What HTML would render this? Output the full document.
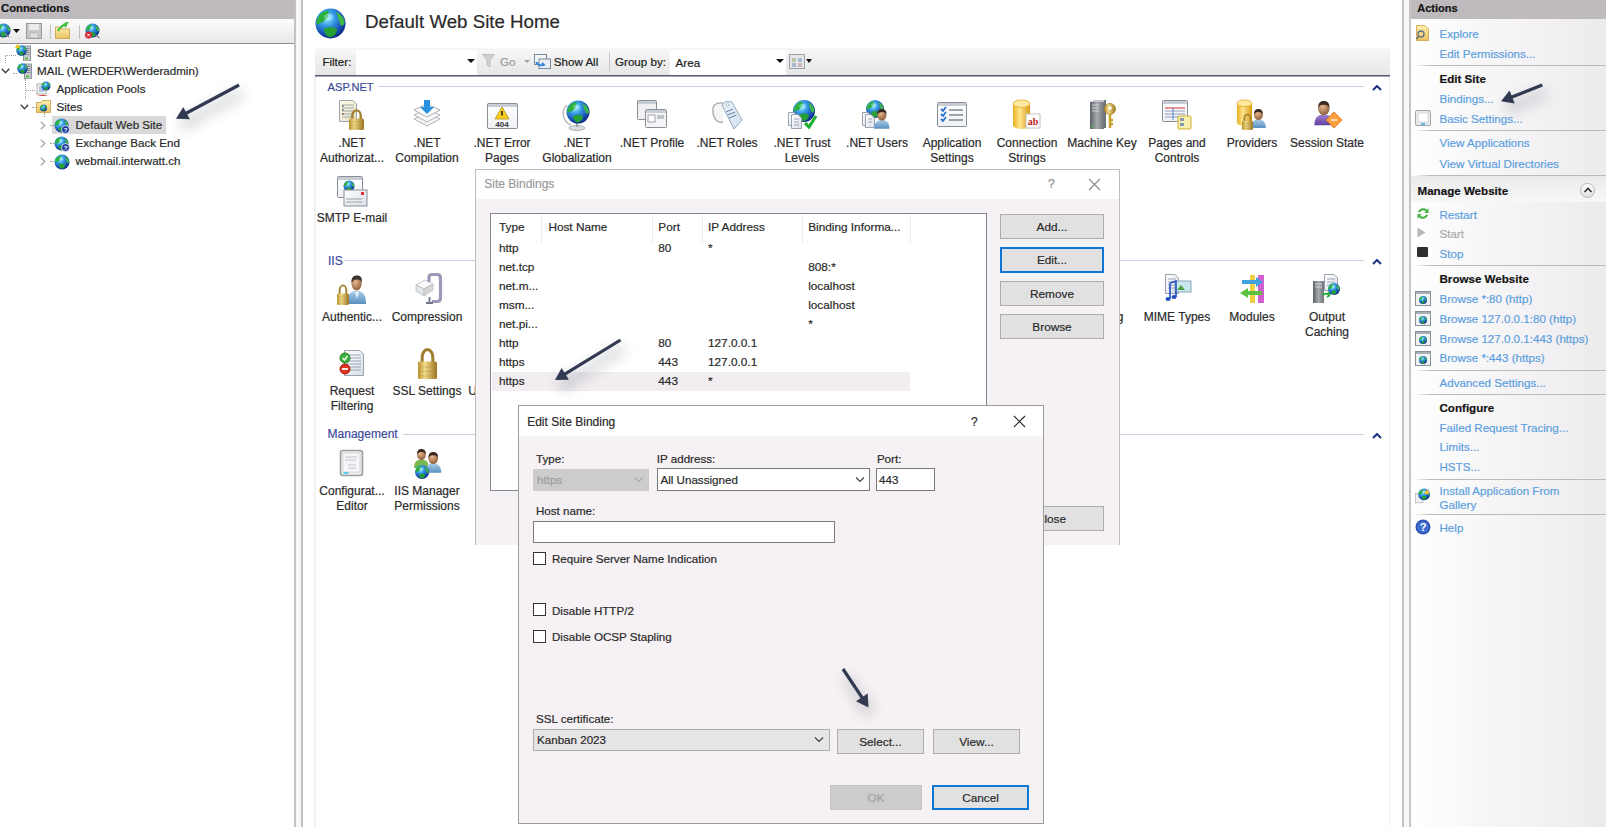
<!DOCTYPE html><html><head><meta charset="utf-8"><style>
html,body{margin:0;padding:0;}
body{width:1606px;height:827px;position:relative;overflow:hidden;background:#fff;font-family:"Liberation Sans", sans-serif;}
.t{position:absolute;white-space:nowrap;line-height:1;-webkit-text-stroke:0.2px currentColor;}
.r{position:absolute;box-sizing:border-box;}

</style></head><body><div id="wrap" style="position:absolute;left:0;top:0;width:1606px;height:827px;overflow:hidden;">
<div class="r" style="left:0px;top:0px;width:295px;height:19px;background:#bebabd;"></div>
<div class="t" style="left:1.0px;top:2.6px;font-size:11.3px;color:#141414;font-weight:bold;">Connections</div>
<div class="r" style="left:0px;top:19px;width:295px;height:25px;background:linear-gradient(#fcfcfc,#e9e7e8);border-bottom:1px solid #8e8e9c;"></div>
<div class="r" style="left:0px;top:44px;width:295px;height:783px;background:#fff;"></div>
<div class="r" style="left:294px;top:0px;width:2px;height:827px;background:#c2c2c2;"></div>
<div class="r" style="left:296px;top:0px;width:5px;height:827px;background:#f7f7f7;"></div>
<div class="r" style="left:301px;top:0px;width:2px;height:827px;background:#c2c2c2;"></div>
<div class="r" style="left:314px;top:77px;width:2px;height:750px;background:#f1f1f1;"></div>
<div class="r" style="left:1389px;top:77px;width:1px;height:750px;background:#f1f1f1;"></div>
<div class="r" style="left:1402px;top:0px;width:2px;height:827px;background:#c2c2c2;"></div>
<div class="r" style="left:1404px;top:0px;width:5px;height:827px;background:#f7f7f7;"></div>
<div class="r" style="left:1409px;top:0px;width:2px;height:827px;background:#c6c6c6;"></div>
<div class="r" style="left:52px;top:116px;width:114px;height:18px;background:#d9d9d9;"></div>
<div class="t" style="left:37.0px;top:46.7px;font-size:11.6px;color:#2a2a2a;font-weight:normal;">Start Page</div>
<div class="t" style="left:37.0px;top:65.1px;font-size:11.6px;color:#2a2a2a;font-weight:normal;">MAIL (WERDER\Werderadmin)</div>
<div class="t" style="left:56.5px;top:83.0px;font-size:11.6px;color:#2a2a2a;font-weight:normal;">Application Pools</div>
<div class="t" style="left:56.5px;top:101.0px;font-size:11.6px;color:#2a2a2a;font-weight:normal;">Sites</div>
<div class="t" style="left:75.5px;top:119.0px;font-size:11.6px;color:#2a2a2a;font-weight:normal;">Default Web Site</div>
<div class="t" style="left:75.5px;top:137.1px;font-size:11.6px;color:#2a2a2a;font-weight:normal;">Exchange Back End</div>
<div class="t" style="left:75.5px;top:155.2px;font-size:11.6px;color:#2a2a2a;font-weight:normal;">webmail.interwatt.ch</div>
<div class="t" style="left:365.0px;top:12.5px;font-size:18.7px;color:#2a2a2a;font-weight:normal;">Default Web Site Home</div>
<div class="r" style="left:315px;top:48px;width:1075px;height:29px;background:linear-gradient(#f7f7f7,#e6e6e6);border-bottom:1px solid #a8a6b8;"></div>
<div class="r" style="left:315px;top:75px;width:1075px;height:1px;background:#5e5a72;"></div>
<div class="r" style="left:356px;top:50px;width:121px;height:25px;background:#fff;"></div>
<div class="r" style="left:670px;top:50px;width:116px;height:25px;background:#fff;"></div>
<div class="t" style="left:322.4px;top:56.2px;font-size:11.6px;color:#202020;font-weight:normal;">Filter:</div>
<div class="t" style="left:500.0px;top:56.2px;font-size:11.6px;color:#9a9a9a;font-weight:normal;">Go</div>
<div class="t" style="left:553.8px;top:56.2px;font-size:11.6px;color:#202020;font-weight:normal;">Show All</div>
<div class="r" style="left:609px;top:52px;width:1px;height:20px;background:#c8c8c8;"></div>
<div class="t" style="left:615.0px;top:56.2px;font-size:11.6px;color:#202020;font-weight:normal;">Group by:</div>
<div class="t" style="left:675.6px;top:56.7px;font-size:11.6px;color:#202020;font-weight:normal;">Area</div>
<div class="t" style="left:327.6px;top:81.6px;font-size:11.1px;color:#3d4d9c;font-weight:normal;">ASP.NET</div>
<div class="r" style="left:378px;top:86px;width:986px;height:1px;background:#c9d0e6;"></div>
<div class="t" style="left:328.0px;top:254.5px;font-size:12px;color:#3d4d9c;font-weight:normal;">IIS</div>
<div class="r" style="left:344px;top:260px;width:1020px;height:1px;background:#c9d0e6;"></div>
<div class="t" style="left:327.6px;top:428.3px;font-size:12px;color:#3d4d9c;font-weight:normal;">Management</div>
<div class="r" style="left:403px;top:434px;width:961px;height:1px;background:#c9d0e6;"></div>
<div class="t" style="left:152.0px;width:400px;text-align:center;top:136.8px;font-size:12px;color:#2a2a2a;font-weight:normal;">.NET</div>
<div class="t" style="left:152.0px;width:400px;text-align:center;top:151.8px;font-size:12px;color:#2a2a2a;font-weight:normal;">Authorizat...</div>
<div class="t" style="left:227.0px;width:400px;text-align:center;top:136.8px;font-size:12px;color:#2a2a2a;font-weight:normal;">.NET</div>
<div class="t" style="left:227.0px;width:400px;text-align:center;top:151.8px;font-size:12px;color:#2a2a2a;font-weight:normal;">Compilation</div>
<div class="t" style="left:302.0px;width:400px;text-align:center;top:136.8px;font-size:12px;color:#2a2a2a;font-weight:normal;">.NET Error</div>
<div class="t" style="left:302.0px;width:400px;text-align:center;top:151.8px;font-size:12px;color:#2a2a2a;font-weight:normal;">Pages</div>
<div class="t" style="left:377.0px;width:400px;text-align:center;top:136.8px;font-size:12px;color:#2a2a2a;font-weight:normal;">.NET</div>
<div class="t" style="left:377.0px;width:400px;text-align:center;top:151.8px;font-size:12px;color:#2a2a2a;font-weight:normal;">Globalization</div>
<div class="t" style="left:452.0px;width:400px;text-align:center;top:136.8px;font-size:12px;color:#2a2a2a;font-weight:normal;">.NET Profile</div>
<div class="t" style="left:527.0px;width:400px;text-align:center;top:136.8px;font-size:12px;color:#2a2a2a;font-weight:normal;">.NET Roles</div>
<div class="t" style="left:602.0px;width:400px;text-align:center;top:136.8px;font-size:12px;color:#2a2a2a;font-weight:normal;">.NET Trust</div>
<div class="t" style="left:602.0px;width:400px;text-align:center;top:151.8px;font-size:12px;color:#2a2a2a;font-weight:normal;">Levels</div>
<div class="t" style="left:677.0px;width:400px;text-align:center;top:136.8px;font-size:12px;color:#2a2a2a;font-weight:normal;">.NET Users</div>
<div class="t" style="left:752.0px;width:400px;text-align:center;top:136.8px;font-size:12px;color:#2a2a2a;font-weight:normal;">Application</div>
<div class="t" style="left:752.0px;width:400px;text-align:center;top:151.8px;font-size:12px;color:#2a2a2a;font-weight:normal;">Settings</div>
<div class="t" style="left:827.0px;width:400px;text-align:center;top:136.8px;font-size:12px;color:#2a2a2a;font-weight:normal;">Connection</div>
<div class="t" style="left:827.0px;width:400px;text-align:center;top:151.8px;font-size:12px;color:#2a2a2a;font-weight:normal;">Strings</div>
<div class="t" style="left:902.0px;width:400px;text-align:center;top:136.8px;font-size:12px;color:#2a2a2a;font-weight:normal;">Machine Key</div>
<div class="t" style="left:977.0px;width:400px;text-align:center;top:136.8px;font-size:12px;color:#2a2a2a;font-weight:normal;">Pages and</div>
<div class="t" style="left:977.0px;width:400px;text-align:center;top:151.8px;font-size:12px;color:#2a2a2a;font-weight:normal;">Controls</div>
<div class="t" style="left:1052.0px;width:400px;text-align:center;top:136.8px;font-size:12px;color:#2a2a2a;font-weight:normal;">Providers</div>
<div class="t" style="left:1127.0px;width:400px;text-align:center;top:136.8px;font-size:12px;color:#2a2a2a;font-weight:normal;">Session State</div>
<div class="t" style="left:152.0px;width:400px;text-align:center;top:211.8px;font-size:12px;color:#2a2a2a;font-weight:normal;">SMTP E-mail</div>
<div class="t" style="left:152.0px;width:400px;text-align:center;top:310.8px;font-size:12px;color:#2a2a2a;font-weight:normal;">Authentic...</div>
<div class="t" style="left:227.0px;width:400px;text-align:center;top:310.8px;font-size:12px;color:#2a2a2a;font-weight:normal;">Compression</div>
<div class="t" style="left:902.0px;width:400px;text-align:center;top:310.8px;font-size:12px;color:#2a2a2a;font-weight:normal;">Logging</div>
<div class="t" style="left:977.0px;width:400px;text-align:center;top:310.8px;font-size:12px;color:#2a2a2a;font-weight:normal;">MIME Types</div>
<div class="t" style="left:1052.0px;width:400px;text-align:center;top:310.8px;font-size:12px;color:#2a2a2a;font-weight:normal;">Modules</div>
<div class="t" style="left:1127.0px;width:400px;text-align:center;top:310.8px;font-size:12px;color:#2a2a2a;font-weight:normal;">Output</div>
<div class="t" style="left:1127.0px;width:400px;text-align:center;top:325.8px;font-size:12px;color:#2a2a2a;font-weight:normal;">Caching</div>
<div class="t" style="left:152.0px;width:400px;text-align:center;top:385.3px;font-size:12px;color:#2a2a2a;font-weight:normal;">Request</div>
<div class="t" style="left:152.0px;width:400px;text-align:center;top:400.3px;font-size:12px;color:#2a2a2a;font-weight:normal;">Filtering</div>
<div class="t" style="left:227.0px;width:400px;text-align:center;top:385.3px;font-size:12px;color:#2a2a2a;font-weight:normal;">SSL Settings</div>
<div class="t" style="left:302.0px;width:400px;text-align:center;top:385.3px;font-size:12px;color:#2a2a2a;font-weight:normal;">URL Rewrite</div>
<div class="t" style="left:152.0px;width:400px;text-align:center;top:484.8px;font-size:12px;color:#2a2a2a;font-weight:normal;">Configurat...</div>
<div class="t" style="left:152.0px;width:400px;text-align:center;top:499.8px;font-size:12px;color:#2a2a2a;font-weight:normal;">Editor</div>
<div class="t" style="left:227.0px;width:400px;text-align:center;top:484.8px;font-size:12px;color:#2a2a2a;font-weight:normal;">IIS Manager</div>
<div class="t" style="left:227.0px;width:400px;text-align:center;top:499.8px;font-size:12px;color:#2a2a2a;font-weight:normal;">Permissions</div>
<div class="r" style="left:1411px;top:0px;width:195px;height:19px;background:#bebabd;"></div>
<div class="t" style="left:1417.3px;top:2.9px;font-size:11px;color:#141414;font-weight:bold;">Actions</div>
<div class="r" style="left:1411px;top:19px;width:195px;height:808px;background:linear-gradient(90deg,#ffffff 0%,#f7f7f7 35%,#f3f0f3 70%,#ebebeb 100%);"></div>
<div class="t" style="left:1439.5px;top:28.0px;font-size:11.6px;color:#5b9fe0;font-weight:normal;">Explore</div>
<div class="t" style="left:1439.5px;top:47.9px;font-size:11.6px;color:#5b9fe0;font-weight:normal;">Edit Permissions...</div>
<div class="t" style="left:1439.5px;top:73.1px;font-size:11.6px;color:#141414;font-weight:bold;">Edit Site</div>
<div class="t" style="left:1439.5px;top:93.2px;font-size:11.6px;color:#5b9fe0;font-weight:normal;">Bindings...</div>
<div class="t" style="left:1439.5px;top:112.9px;font-size:11.6px;color:#5b9fe0;font-weight:normal;">Basic Settings...</div>
<div class="t" style="left:1439.5px;top:137.4px;font-size:11.6px;color:#5b9fe0;font-weight:normal;">View Applications</div>
<div class="t" style="left:1439.5px;top:157.7px;font-size:11.6px;color:#5b9fe0;font-weight:normal;">View Virtual Directories</div>
<div class="r" style="left:1414px;top:65px;width:192px;height:2px;background:linear-gradient(90deg,rgba(170,170,170,0),#bababa 17px);height:1px;"></div>
<div class="r" style="left:1414px;top:130px;width:192px;height:2px;background:linear-gradient(90deg,rgba(170,170,170,0),#bababa 17px);height:1px;"></div>
<div class="r" style="left:1414px;top:175px;width:192px;height:2px;background:linear-gradient(90deg,rgba(170,170,170,0),#bababa 17px);height:1px;"></div>
<svg width="0" height="0" style="position:absolute"><defs>
<radialGradient id="gGlobe" cx="0.38" cy="0.32" r="0.7"><stop offset="0" stop-color="#a8f0ff"/><stop offset="0.35" stop-color="#3aa0e8"/><stop offset="0.8" stop-color="#1448b0"/><stop offset="1" stop-color="#0c2c80"/></radialGradient>
<linearGradient id="gGold" x1="0" y1="0" x2="1" y2="0"><stop offset="0" stop-color="#b8902a"/><stop offset="0.35" stop-color="#f2dc8a"/><stop offset="1" stop-color="#9c7420"/></linearGradient>
<linearGradient id="gGoldV" x1="0" y1="0" x2="0" y2="1"><stop offset="0" stop-color="#f8e8a0"/><stop offset="1" stop-color="#b08828"/></linearGradient>
<linearGradient id="gCyl" x1="0" y1="0" x2="1" y2="0"><stop offset="0" stop-color="#e8b020"/><stop offset="0.4" stop-color="#ffe690"/><stop offset="1" stop-color="#d89a10"/></linearGradient>
<linearGradient id="gPaper" x1="0" y1="0" x2="1" y2="1"><stop offset="0" stop-color="#ffffff"/><stop offset="1" stop-color="#d8dee8"/></linearGradient>
<linearGradient id="gCream" x1="0" y1="0" x2="1" y2="1"><stop offset="0" stop-color="#fffbea"/><stop offset="1" stop-color="#e8e0c0"/></linearGradient>
<linearGradient id="gGray" x1="0" y1="0" x2="1" y2="0"><stop offset="0" stop-color="#5a6068"/><stop offset="0.5" stop-color="#a8acb0"/><stop offset="1" stop-color="#70747a"/></linearGradient>
<linearGradient id="gFolder" x1="0" y1="0" x2="0" y2="1"><stop offset="0" stop-color="#fff0b0"/><stop offset="1" stop-color="#e8c060"/></linearGradient>
<radialGradient id="gFace" cx="0.4" cy="0.35" r="0.7"><stop offset="0" stop-color="#e8b890"/><stop offset="1" stop-color="#8a5a38"/></radialGradient>
<linearGradient id="gShirt" x1="0" y1="0" x2="0" y2="1"><stop offset="0" stop-color="#a8cce8"/><stop offset="1" stop-color="#5a90c0"/></linearGradient>
<linearGradient id="gPurple" x1="0" y1="0" x2="0" y2="1"><stop offset="0" stop-color="#a080d0"/><stop offset="1" stop-color="#6040a0"/></linearGradient>
<linearGradient id="gWin" x1="0" y1="0" x2="0" y2="1"><stop offset="0" stop-color="#ffffff"/><stop offset="1" stop-color="#eef0f4"/></linearGradient>
<filter id="soft"><feGaussianBlur stdDeviation="0.35"/></filter>
</defs></svg>
<svg class="r" style="left:336px;top:99px" width="32" height="32" viewBox="0 0 32 32"><g transform="translate(3,1)"><path d="M0.5 0.5 H14 L17.5 4 V21.5 H0.5 Z" fill="url(#gCream)" stroke="#9aa2ae" stroke-width="1"/><path d="M3 5 H15" stroke="#7a8aa0" stroke-width="1" opacity="0.7"/><path d="M3 8 H15" stroke="#7a8aa0" stroke-width="1" opacity="0.7"/><path d="M3 11 H15" stroke="#7a8aa0" stroke-width="1" opacity="0.7"/><path d="M3 14 H15" stroke="#7a8aa0" stroke-width="1" opacity="0.7"/><path d="M3 17 H15" stroke="#7a8aa0" stroke-width="1" opacity="0.7"/></g><path d="M6 7h1.5M6 11h1.5M6 15h1.5" stroke="#555" stroke-width="1.5"/><g transform="translate(13,11)"><path d="M3.3 9.0 V5.6000000000000005 A4.2 5.2 0 0 1 11.700000000000001 5.6000000000000005 V9.0" stroke="#a08030" stroke-width="2.4" fill="none"/><rect x="0" y="8.4" width="15" height="11.6" rx="1.5" fill="url(#gGold)"/><path d="M1 12.0 H14 M1 15.0 H14 M1 18.0 H14" stroke="#a88a38" stroke-width="0.6" opacity="0.6"/></g></svg>
<svg class="r" style="left:411px;top:99px" width="32" height="32" viewBox="0 0 32 32"><path d="M16 14 L29 20 L16 27 L3 20 Z" fill="#f4f4f4" stroke="#b0b4ba"/><path d="M16 10 L29 16 L16 23 L3 16 Z" fill="#f8f8f8" stroke="#b0b4ba"/><path d="M16 5 L29 11 L16 18 L3 11 Z" fill="#fff" stroke="#a8acb2"/><path d="M13 1 H19 V8 H23 L16 15 L9 8 H13 Z" fill="#2a90e0"/></svg>
<svg class="r" style="left:486px;top:99px" width="32" height="32" viewBox="0 0 32 32"><g transform="translate(1,4)"><rect x="0.5" y="0.5" width="30" height="25" rx="1" fill="url(#gWin)" stroke="#8a8e96" stroke-width="1"/><rect x="1" y="1" width="29" height="3" fill="#c8ccd4"/></g><path d="M16 8 L23 20 H9 Z" fill="#f8d020" stroke="#b89010" stroke-width="0.8"/><path d="M16 12 V16.5" stroke="#222" stroke-width="1.6"/><text x="16" y="28" font-size="8" font-family="Liberation Sans" font-weight="bold" text-anchor="middle" fill="#333">404</text></svg>
<svg class="r" style="left:561px;top:99px" width="32" height="32" viewBox="0 0 32 32"><ellipse cx="16" cy="29" rx="8" ry="2.5" fill="#d8dce0" stroke="#b0b4b8"/><path d="M16 24 V28" stroke="#a0a4a8" stroke-width="2"/><path d="M6 6 A12 12 0 0 0 10 26" stroke="#b8bcc0" stroke-width="1.5" fill="none"/><g transform="translate(5.5,1.5) scale(0.71875)"><circle cx="16" cy="16" r="16" fill="url(#gGlobe)"/><path d="M2.5 10 C5 5 9 2.5 14 2.5 C15 5 12 8 13 10 C10 12 9 15 6 15 C4 16 2.5 17 1 17 C1 14 1.5 12 2.5 10 Z" fill="#2cb03c"/><path d="M9 22 C13 19 19 19 23 22 C23 27 19 30.5 14 30.5 C11 28 9 25 9 22 Z" fill="#24a034"/><path d="M22 4 C26 5 30 9 31 14 C31 18 29 19 27 18 C26 14 24 12 24 9 Z" fill="#3cb848"/><ellipse cx="14" cy="9" rx="5" ry="3.5" fill="#c8ffff" opacity="0.35"/></g></svg>
<svg class="r" style="left:636px;top:99px" width="32" height="32" viewBox="0 0 32 32"><g transform="translate(1,1)"><rect x="0.5" y="0.5" width="19" height="19" rx="1" fill="#f0f0f2" stroke="#8a8e96" stroke-width="1"/><rect x="1" y="1" width="18" height="3" fill="#c8ccd4"/></g><g transform="translate(9,10)"><rect x="0.5" y="0.5" width="21" height="18" rx="1" fill="#f4f4f6" stroke="#8a8e96" stroke-width="1"/><rect x="1" y="1" width="20" height="3" fill="#c8ccd4"/></g><rect x="12" y="16" width="7" height="7" fill="#fff" stroke="#a0a0a8"/><rect x="21" y="16" width="7" height="4" fill="#c0c4cc"/></svg>
<svg class="r" style="left:711px;top:99px" width="32" height="32" viewBox="0 0 32 32"><path d="M12 4 C4 3 1 7 2 14 C3 21 7 24 12 23" stroke="#a8aeb4" stroke-width="1.4" fill="#f6f6f6"/><path d="M11 6 L15 2.5 L21 3 L31 21 L23 30 Z" fill="url(#gPaper)" stroke="#7c98b0" stroke-width="1"/><path d="M11 6 L15 2.5 L21 3 L31 21 L23 30 Z" fill="#cfe4f4" opacity="0.5"/><circle cx="16.5" cy="6" r="1.3" fill="#fff" stroke="#8aa0b4" stroke-width="0.6"/><path d="M15 13 L22 10 M16.5 16 L24 13 M18 19 L25.5 16" stroke="#6a80a0" stroke-width="1"/></svg>
<svg class="r" style="left:786px;top:99px" width="32" height="32" viewBox="0 0 32 32"><g transform="translate(7,1) scale(0.6875)"><circle cx="16" cy="16" r="16" fill="url(#gGlobe)"/><path d="M2.5 10 C5 5 9 2.5 14 2.5 C15 5 12 8 13 10 C10 12 9 15 6 15 C4 16 2.5 17 1 17 C1 14 1.5 12 2.5 10 Z" fill="#2cb03c"/><path d="M9 22 C13 19 19 19 23 22 C23 27 19 30.5 14 30.5 C11 28 9 25 9 22 Z" fill="#24a034"/><path d="M22 4 C26 5 30 9 31 14 C31 18 29 19 27 18 C26 14 24 12 24 9 Z" fill="#3cb848"/><ellipse cx="14" cy="9" rx="5" ry="3.5" fill="#c8ffff" opacity="0.35"/></g><g transform="translate(2,13)"><path d="M0.5 0.5 H6 L9.5 4 V13.5 H0.5 Z" fill="url(#gPaper)" stroke="#9aa2ae" stroke-width="1"/><path d="M3 5 H7" stroke="#7a8aa0" stroke-width="1" opacity="0.7"/><path d="M3 8 H7" stroke="#7a8aa0" stroke-width="1" opacity="0.7"/></g><g transform="translate(5,15)"><path d="M0.5 0.5 H7 L10.5 4 V14.5 H0.5 Z" fill="url(#gPaper)" stroke="#9aa2ae" stroke-width="1"/><path d="M3 5 H8" stroke="#7a8aa0" stroke-width="1" opacity="0.7"/><path d="M3 8 H8" stroke="#7a8aa0" stroke-width="1" opacity="0.7"/><path d="M3 11 H8" stroke="#7a8aa0" stroke-width="1" opacity="0.7"/></g><path d="M19 24 L23 28 L30 17" stroke="#20b030" stroke-width="3.2" fill="none"/></svg>
<svg class="r" style="left:861px;top:99px" width="32" height="32" viewBox="0 0 32 32"><g transform="translate(5,1) scale(0.5625)"><circle cx="16" cy="16" r="16" fill="url(#gGlobe)"/><path d="M2.5 10 C5 5 9 2.5 14 2.5 C15 5 12 8 13 10 C10 12 9 15 6 15 C4 16 2.5 17 1 17 C1 14 1.5 12 2.5 10 Z" fill="#2cb03c"/><path d="M9 22 C13 19 19 19 23 22 C23 27 19 30.5 14 30.5 C11 28 9 25 9 22 Z" fill="#24a034"/><path d="M22 4 C26 5 30 9 31 14 C31 18 29 19 27 18 C26 14 24 12 24 9 Z" fill="#3cb848"/><ellipse cx="14" cy="9" rx="5" ry="3.5" fill="#c8ffff" opacity="0.35"/></g><g transform="translate(1,13)"><path d="M0.5 0.5 H6 L9.5 4 V13.5 H0.5 Z" fill="url(#gPaper)" stroke="#9aa2ae" stroke-width="1"/><path d="M3 5 H7" stroke="#7a8aa0" stroke-width="1" opacity="0.7"/><path d="M3 8 H7" stroke="#7a8aa0" stroke-width="1" opacity="0.7"/></g><g transform="translate(4,15)"><path d="M0.5 0.5 H6 L9.5 4 V13.5 H0.5 Z" fill="url(#gPaper)" stroke="#9aa2ae" stroke-width="1"/><path d="M3 5 H7" stroke="#7a8aa0" stroke-width="1" opacity="0.7"/><path d="M3 8 H7" stroke="#7a8aa0" stroke-width="1" opacity="0.7"/></g><g transform="translate(12,10) scale(1.1)"><path d="M1 18 C1 12 4 10 8 10 C12 10 15 12 15 18 Z" fill="url(#gShirt)"/><ellipse cx="8" cy="5.5" rx="4.2" ry="5" fill="url(#gFace)"/><path d="M3.8 5 C3.8 1 6 0 8 0 C11 0 12.4 2 12.2 5 C11 3 9 2.5 8 3 C6 2.5 5 3.5 3.8 5 Z" fill="#3a2a20"/></g></svg>
<svg class="r" style="left:936px;top:99px" width="32" height="32" viewBox="0 0 32 32"><g transform="translate(1,3)"><rect x="0.5" y="0.5" width="29" height="24" rx="1" fill="url(#gWin)" stroke="#8a8e96" stroke-width="1"/><rect x="1" y="1" width="28" height="3" fill="#c8ccd4"/></g><path d="M5 10 L7 12 L10 8" stroke="#2a70d0" stroke-width="1.8" fill="none"/><path d="M13 11 H27" stroke="#606878" stroke-width="1.2"/><path d="M5 15 L7 17 L10 13" stroke="#2a70d0" stroke-width="1.8" fill="none"/><path d="M13 16 H27" stroke="#606878" stroke-width="1.2"/><path d="M5 20 L7 22 L10 18" stroke="#2a70d0" stroke-width="1.8" fill="none"/><path d="M13 21 H27" stroke="#606878" stroke-width="1.2"/></svg>
<svg class="r" style="left:1011px;top:99px" width="32" height="32" viewBox="0 0 32 32"><g transform="translate(2,1)"><path d="M0 3.74 V25.259999999999998 A8.5 3.74 0 0 0 17 25.259999999999998 V3.74 Z" fill="url(#gCyl)"/><ellipse cx="8.5" cy="3.74" rx="8.5" ry="3.74" fill="#ffe9a0" stroke="#e0a820" stroke-width="0.8"/></g><path d="M15 15 H29 V29 H15 Z" fill="#fff" stroke="#c0c0c0"/><text x="22" y="26" font-size="10" font-family="Liberation Serif" font-weight="bold" text-anchor="middle" fill="#c02020">ab</text></svg>
<svg class="r" style="left:1086px;top:99px" width="32" height="32" viewBox="0 0 32 32"><path d="M4 3 L8 1 H20 L18 3 Z" fill="#c0c4c8"/><rect x="4" y="3" width="14" height="27" fill="url(#gGray)"/><path d="M6 6 H13 M6 9 H13 M6 12 H13" stroke="#d0d4d8" stroke-width="1"/><rect x="18" y="1" width="2" height="28" fill="#70747a"/><circle cx="7" cy="27" r="1" fill="#40d040"/><circle cx="24" cy="10" r="5.5" fill="url(#gGold)" stroke="#a88020" stroke-width="0.8"/><circle cx="24" cy="9" r="1.8" fill="#fff"/><path d="M24 15 V29 M24 21 H27 M24 25 H27" stroke="#c8a030" stroke-width="2.5"/></svg>
<svg class="r" style="left:1161px;top:99px" width="32" height="32" viewBox="0 0 32 32"><g transform="translate(1,1)"><rect x="0.5" y="0.5" width="25" height="21" rx="1" fill="url(#gWin)" stroke="#8a8e96" stroke-width="1"/><rect x="1" y="1" width="24" height="3" fill="#c8ccd4"/></g><path d="M4 9 H24" stroke="#d03030" stroke-width="1"/><path d="M4 12 H24 M4 15 H24 M4 18 H24" stroke="#90a0c0" stroke-width="1"/><path d="M12 9 V21" stroke="#5080d0" stroke-width="1"/><rect x="17" y="17" width="13" height="13" rx="1" fill="#f8f0b0" stroke="#d0b030"/><rect x="19" y="19" width="4" height="3" fill="#8898b0"/><rect x="19" y="24" width="4" height="3" fill="#8898b0"/></svg>
<svg class="r" style="left:1236px;top:99px" width="32" height="32" viewBox="0 0 32 32"><g transform="translate(1,1)"><path d="M0 3.3 V22.7 A7.5 3.3 0 0 0 15 22.7 V3.3 Z" fill="url(#gCyl)"/><ellipse cx="7.5" cy="3.3" rx="7.5" ry="3.3" fill="#ffe9a0" stroke="#e0a820" stroke-width="0.8"/></g><g transform="translate(14,10) scale(1.05)"><path d="M1 18 C1 12 4 10 8 10 C12 10 15 12 15 18 Z" fill="url(#gShirt)"/><ellipse cx="8" cy="5.5" rx="4.2" ry="5" fill="url(#gFace)"/><path d="M3.8 5 C3.8 1 6 0 8 0 C11 0 12.4 2 12.2 5 C11 3 9 2.5 8 3 C6 2.5 5 3.5 3.8 5 Z" fill="#3a2a20"/></g><g transform="translate(6,15)"><path d="M2.42 7.2 V4.48 A3.08 4.16 0 0 1 8.58 4.48 V7.2" stroke="#a08030" stroke-width="1.76" fill="none"/><rect x="0" y="6.72" width="11" height="9.28" rx="1.5" fill="url(#gGold)"/><path d="M1 9.6 H10 M1 12.0 H10 M1 14.4 H10" stroke="#a88a38" stroke-width="0.6" opacity="0.6"/></g></svg>
<svg class="r" style="left:1311px;top:99px" width="32" height="32" viewBox="0 0 32 32"><g transform="translate(2,2) scale(1.35)"><path d="M1 18 C1 12 4 10 8 10 C12 10 15 12 15 18 Z" fill="url(#gPurple)"/><ellipse cx="8" cy="5.5" rx="4.2" ry="5" fill="url(#gFace)"/><path d="M3.8 5 C3.8 1 6 0 8 0 C11 0 12.4 2 12.2 5 C11 3 9 2.5 8 3 C6 2.5 5 3.5 3.8 5 Z" fill="#3a2a20"/></g><path d="M23 13 L31 21 L23 29 L15 21 Z" fill="#f8a040" stroke="#e07010" stroke-width="0.8"/><path d="M20 21 H26" stroke="#fff" stroke-width="1.2"/></svg>
<svg class="r" style="left:336px;top:175px" width="32" height="32" viewBox="0 0 32 32"><g transform="translate(1,1)"><rect x="0.5" y="0.5" width="25" height="21" rx="1" fill="url(#gWin)" stroke="#8a8e96" stroke-width="1"/><rect x="1" y="1" width="24" height="3" fill="#c8ccd4"/></g><g transform="translate(7.5,5.5) scale(0.34375)"><circle cx="16" cy="16" r="16" fill="url(#gGlobe)"/><path d="M2.5 10 C5 5 9 2.5 14 2.5 C15 5 12 8 13 10 C10 12 9 15 6 15 C4 16 2.5 17 1 17 C1 14 1.5 12 2.5 10 Z" fill="#2cb03c"/><path d="M9 22 C13 19 19 19 23 22 C23 27 19 30.5 14 30.5 C11 28 9 25 9 22 Z" fill="#24a034"/><path d="M22 4 C26 5 30 9 31 14 C31 18 29 19 27 18 C26 14 24 12 24 9 Z" fill="#3cb848"/><ellipse cx="14" cy="9" rx="5" ry="3.5" fill="#c8ffff" opacity="0.35"/></g><rect x="8" y="15" width="23" height="16" fill="url(#gPaper)" stroke="#8a8e96"/><path d="M10 24 H26 M10 27 H26" stroke="#a0a4aa"/><rect x="25" y="17" width="3" height="3" fill="#e03030"/></svg>
<svg class="r" style="left:336px;top:273px" width="32" height="32" viewBox="0 0 32 32"><path d="M11 31 C11 22 14 18 21 18 C28 18 30 23 30 31 Z" fill="url(#gShirt)"/><path d="M19 19 L21 26 L23 19 Z" fill="#e8f0f8"/><ellipse cx="20.5" cy="11" rx="5" ry="6.5" fill="url(#gFace)"/><path d="M15.5 10 C15 4 18 2.5 21 2.5 C25 2.5 26.5 5 25.8 10 C25 7 23 6 21 6.5 C18.5 6 17 7.5 15.5 10 Z" fill="#3a3430"/><g transform="translate(1,12)"><path d="M2.64 9.0 V5.6000000000000005 A3.3600000000000003 5.2 0 0 1 9.36 5.6000000000000005 V9.0" stroke="#a08030" stroke-width="1.92" fill="none"/><rect x="0" y="8.4" width="12" height="11.6" rx="1.5" fill="url(#gGold)"/><path d="M1 12.0 H11 M1 15.0 H11 M1 18.0 H11" stroke="#a88a38" stroke-width="0.6" opacity="0.6"/></g></svg>
<svg class="r" style="left:411px;top:273px" width="32" height="32" viewBox="0 0 32 32"><path d="M5 12 L14 7 L22 11 L13 16 Z" fill="#fafafa" stroke="#b8bcc0" stroke-width="0.8"/><path d="M5 12 V18 L13 23 V16 Z" fill="#e4e6e8" stroke="#b8bcc0" stroke-width="0.8"/><path d="M13 16 L22 11 V17 L13 23 Z" fill="#d4d6d8" stroke="#b8bcc0" stroke-width="0.8"/><path d="M18 9 V4 C18 2 20 1.5 22 1.5 H26 C28.5 1.5 29.5 3 29.5 5 V25 C29.5 27.5 28 28.5 26 28.5 H21" stroke="#9a9ab8" stroke-width="3.2" fill="none"/><path d="M18.5 24 V30 M15 30 H22" stroke="#707488" stroke-width="1.8"/></svg>
<svg class="r" style="left:1161px;top:273px" width="32" height="32" viewBox="0 0 32 32"><g transform="translate(4,1)"><path d="M0.5 0.5 H10 L13.5 4 V19.5 H0.5 Z" fill="url(#gPaper)" stroke="#9aa2ae" stroke-width="1"/><path d="M3 5 H11" stroke="#7a8aa0" stroke-width="1" opacity="0.7"/><path d="M3 8 H11" stroke="#7a8aa0" stroke-width="1" opacity="0.7"/><path d="M3 11 H11" stroke="#7a8aa0" stroke-width="1" opacity="0.7"/><path d="M3 14 H11" stroke="#7a8aa0" stroke-width="1" opacity="0.7"/></g><rect x="14" y="8" width="16" height="11" fill="#c8e8f0" stroke="#90a8b8"/><path d="M16 17 L20 12 L24 17 Z" fill="#50a040"/><path d="M9 10 V26 M9 10 L15 8 V24" stroke="#2050c0" stroke-width="1.6" fill="none"/><ellipse cx="7" cy="26" rx="2.5" ry="2" fill="#2050c0"/><ellipse cx="13" cy="24" rx="2.5" ry="2" fill="#2050c0"/></svg>
<svg class="r" style="left:1236px;top:273px" width="32" height="32" viewBox="0 0 32 32"><rect x="14" y="2" width="5" height="28" fill="#f0d040"/><rect x="22" y="2" width="6" height="28" fill="#d060d0"/><path d="M6 7 H20 V4 L27 9 L20 14 V11 H6 Z" fill="#40a0e0"/><path d="M26 18 H12 V15 L4 20 L12 25 V22 H26 Z" fill="#60c040"/></svg>
<svg class="r" style="left:1311px;top:273px" width="32" height="32" viewBox="0 0 32 32"><rect x="2" y="8" width="11" height="22" fill="url(#gGray)"/><path d="M4 11 H11 M4 14 H11" stroke="#d0d4d8"/><g transform="translate(13,1)"><path d="M0.5 0.5 H10 L13.5 4 V16.5 H0.5 Z" fill="url(#gPaper)" stroke="#9aa2ae" stroke-width="1"/><path d="M3 5 H11" stroke="#7a8aa0" stroke-width="1" opacity="0.7"/><path d="M3 8 H11" stroke="#7a8aa0" stroke-width="1" opacity="0.7"/><path d="M3 11 H11" stroke="#7a8aa0" stroke-width="1" opacity="0.7"/></g><g transform="translate(17,10) scale(0.375)"><circle cx="16" cy="16" r="16" fill="url(#gGlobe)"/><path d="M2.5 10 C5 5 9 2.5 14 2.5 C15 5 12 8 13 10 C10 12 9 15 6 15 C4 16 2.5 17 1 17 C1 14 1.5 12 2.5 10 Z" fill="#2cb03c"/><path d="M9 22 C13 19 19 19 23 22 C23 27 19 30.5 14 30.5 C11 28 9 25 9 22 Z" fill="#24a034"/><path d="M22 4 C26 5 30 9 31 14 C31 18 29 19 27 18 C26 14 24 12 24 9 Z" fill="#3cb848"/><ellipse cx="14" cy="9" rx="5" ry="3.5" fill="#c8ffff" opacity="0.35"/></g><path d="M11 22 C14 20 16 20 19 22 L17 19 M19 22 L16 24" stroke="#30b040" stroke-width="2" fill="none"/></svg>
<svg class="r" style="left:336px;top:348px" width="32" height="32" viewBox="0 0 32 32"><g transform="translate(8,2)"><path d="M0.5 0.5 H16 L19.5 4 V25.5 H0.5 Z" fill="url(#gPaper)" stroke="#9aa2ae" stroke-width="1"/><path d="M3 5 H17" stroke="#7a8aa0" stroke-width="1" opacity="0.7"/><path d="M3 8 H17" stroke="#7a8aa0" stroke-width="1" opacity="0.7"/><path d="M3 11 H17" stroke="#7a8aa0" stroke-width="1" opacity="0.7"/><path d="M3 14 H17" stroke="#7a8aa0" stroke-width="1" opacity="0.7"/><path d="M3 17 H17" stroke="#7a8aa0" stroke-width="1" opacity="0.7"/><path d="M3 20 H17" stroke="#7a8aa0" stroke-width="1" opacity="0.7"/></g><circle cx="9" cy="10" r="5" fill="#40b040" stroke="#208020"/><path d="M6.5 10 L8.5 12 L11.5 8" stroke="#fff" stroke-width="1.3" fill="none"/><circle cx="9" cy="21" r="5" fill="#e03020" stroke="#a02010"/><path d="M6 21 H12" stroke="#fff" stroke-width="1.8"/></svg>
<svg class="r" style="left:411px;top:348px" width="32" height="32" viewBox="0 0 32 32"><g transform="translate(7,1)"><path d="M4.18 13.5 V8.4 A5.32 7.800000000000001 0 0 1 14.82 8.4 V13.5" stroke="#a08030" stroke-width="3.04" fill="none"/><rect x="0" y="12.6" width="19" height="17.4" rx="1.5" fill="url(#gGold)"/><path d="M1 18.0 H18 M1 22.5 H18 M1 27.0 H18" stroke="#a88a38" stroke-width="0.6" opacity="0.6"/></g></svg>
<svg class="r" style="left:336px;top:448px" width="32" height="32" viewBox="0 0 32 32"><rect x="4.5" y="2.5" width="22" height="25" rx="2.5" fill="#ececee" stroke="#9c9ea2" stroke-width="1.6"/><rect x="7" y="5" width="17" height="19" fill="#f6f6f8" stroke="#c8cacc" stroke-width="0.6"/><path d="M9 9 H21 M9 12 H20 M12 17 H20 M12 20 H20" stroke="#b8bcc4" stroke-width="0.9"/><rect x="7.5" y="24" width="5" height="2" fill="#5cc8e8"/></svg>
<svg class="r" style="left:411px;top:448px" width="32" height="32" viewBox="0 0 32 32"><g transform="translate(2,1) scale(1.05)"><path d="M1 18 C1 12 4 10 8 10 C12 10 15 12 15 18 Z" fill="#7ab850"/><ellipse cx="8" cy="5.5" rx="4.2" ry="5" fill="url(#gFace)"/><path d="M3.8 5 C3.8 1 6 0 8 0 C11 0 12.4 2 12.2 5 C11 3 9 2.5 8 3 C6 2.5 5 3.5 3.8 5 Z" fill="#3a2a20"/></g><g transform="translate(13,4) scale(1.15)"><path d="M1 18 C1 12 4 10 8 10 C12 10 15 12 15 18 Z" fill="url(#gShirt)"/><ellipse cx="8" cy="5.5" rx="4.2" ry="5" fill="url(#gFace)"/><path d="M3.8 5 C3.8 1 6 0 8 0 C11 0 12.4 2 12.2 5 C11 3 9 2.5 8 3 C6 2.5 5 3.5 3.8 5 Z" fill="#3a2a20"/></g><g transform="translate(4,17) scale(0.4375)"><circle cx="16" cy="16" r="16" fill="url(#gGlobe)"/><path d="M2.5 10 C5 5 9 2.5 14 2.5 C15 5 12 8 13 10 C10 12 9 15 6 15 C4 16 2.5 17 1 17 C1 14 1.5 12 2.5 10 Z" fill="#2cb03c"/><path d="M9 22 C13 19 19 19 23 22 C23 27 19 30.5 14 30.5 C11 28 9 25 9 22 Z" fill="#24a034"/><path d="M22 4 C26 5 30 9 31 14 C31 18 29 19 27 18 C26 14 24 12 24 9 Z" fill="#3cb848"/><ellipse cx="14" cy="9" rx="5" ry="3.5" fill="#c8ffff" opacity="0.35"/></g></svg>
<svg class="r" style="left:315px;top:8px" width="31" height="31" viewBox="0 0 32 32"><g transform="translate(0.5,0.5) scale(0.96875)"><circle cx="16" cy="16" r="16" fill="url(#gGlobe)"/><path d="M2.5 10 C5 5 9 2.5 14 2.5 C15 5 12 8 13 10 C10 12 9 15 6 15 C4 16 2.5 17 1 17 C1 14 1.5 12 2.5 10 Z" fill="#2cb03c"/><path d="M9 22 C13 19 19 19 23 22 C23 27 19 30.5 14 30.5 C11 28 9 25 9 22 Z" fill="#24a034"/><path d="M22 4 C26 5 30 9 31 14 C31 18 29 19 27 18 C26 14 24 12 24 9 Z" fill="#3cb848"/><ellipse cx="14" cy="9" rx="5" ry="3.5" fill="#c8ffff" opacity="0.35"/></g></svg>
<svg class="r" style="left:1372px;top:84.5px;" width="10" height="6" viewBox="0 0 10 6"><path d="M1 5 L5 1 L9 5" stroke="#1e3080" stroke-width="2" fill="none"/></svg>
<svg class="r" style="left:1372px;top:258.5px;" width="10" height="6" viewBox="0 0 10 6"><path d="M1 5 L5 1 L9 5" stroke="#1e3080" stroke-width="2" fill="none"/></svg>
<svg class="r" style="left:1372px;top:432.5px;" width="10" height="6" viewBox="0 0 10 6"><path d="M1 5 L5 1 L9 5" stroke="#1e3080" stroke-width="2" fill="none"/></svg>
<svg class="r" style="left:-4px;top:23px" width="15" height="15" viewBox="0 0 32 32"><g transform="translate(1,1) scale(0.9375)"><circle cx="16" cy="16" r="16" fill="url(#gGlobe)"/><path d="M2.5 10 C5 5 9 2.5 14 2.5 C15 5 12 8 13 10 C10 12 9 15 6 15 C4 16 2.5 17 1 17 C1 14 1.5 12 2.5 10 Z" fill="#2cb03c"/><path d="M9 22 C13 19 19 19 23 22 C23 27 19 30.5 14 30.5 C11 28 9 25 9 22 Z" fill="#24a034"/><path d="M22 4 C26 5 30 9 31 14 C31 18 29 19 27 18 C26 14 24 12 24 9 Z" fill="#3cb848"/><ellipse cx="14" cy="9" rx="5" ry="3.5" fill="#c8ffff" opacity="0.35"/></g><path d="M20 24 L28 30" stroke="#889" stroke-width="3"/></svg>
<svg class="r" style="left:13px;top:29px" width="7" height="4" viewBox="0 0 7 4"><path d="M0 0 H7 L3.5 4 Z" fill="#111"/></svg>
<svg class="r" style="left:26px;top:23px" width="16" height="16" viewBox="0 0 16 16"><rect x="0.5" y="0.5" width="15" height="15" fill="#c8c8c8" stroke="#9a9a9a"/><rect x="3" y="1" width="10" height="6" fill="#ececec"/><rect x="4" y="10" width="8" height="5" fill="#e0e0e0" stroke="#a0a0a0" stroke-width="0.5"/></svg>
<div class="r" style="left:50px;top:25px;width:1px;height:14px;background:#c0c0c0;"></div>
<svg class="r" style="left:55px;top:22px" width="15" height="17" viewBox="0 0 15 17"><path d="M0.5 5 H6 L7 7 H14.5 V16.5 H0.5 Z" fill="url(#gFolder)" stroke="#c8a040" stroke-width="0.8"/><path d="M3 9 C5 5 8 3 12 1 L10 5" stroke="#40c040" stroke-width="2" fill="none"/></svg>
<div class="r" style="left:79px;top:25px;width:1px;height:14px;background:#c0c0c0;"></div>
<svg class="r" style="left:84px;top:23px" width="17" height="16" viewBox="0 0 32 32"><g transform="translate(2,1) scale(0.875)"><circle cx="16" cy="16" r="16" fill="url(#gGlobe)"/><path d="M2.5 10 C5 5 9 2.5 14 2.5 C15 5 12 8 13 10 C10 12 9 15 6 15 C4 16 2.5 17 1 17 C1 14 1.5 12 2.5 10 Z" fill="#2cb03c"/><path d="M9 22 C13 19 19 19 23 22 C23 27 19 30.5 14 30.5 C11 28 9 25 9 22 Z" fill="#24a034"/><path d="M22 4 C26 5 30 9 31 14 C31 18 29 19 27 18 C26 14 24 12 24 9 Z" fill="#3cb848"/><ellipse cx="14" cy="9" rx="5" ry="3.5" fill="#c8ffff" opacity="0.35"/></g><circle cx="8" cy="24" r="7" fill="#d02030"/><path d="M5 21 L11 27 M11 21 L5 27" stroke="#fff" stroke-width="2"/><path d="M22 24 L30 30" stroke="#889" stroke-width="3"/></svg>
<svg class="r" style="left:16px;top:45px" width="16" height="16" viewBox="0 0 16 16"><rect x="7.5" y="1" width="7" height="15" fill="#c4cad0" stroke="#7a8088" stroke-width="0.8"/><path d="M8.5 3.5 H13.5 M8.5 5.5 H13.5 M8.5 7.5 H13.5 M8.5 9.5 H13.5" stroke="#6a7480" stroke-width="0.7"/><rect x="9" y="12.5" width="3" height="2" fill="#60c040"/><g transform="translate(0.2999999999999998,0.2999999999999998) scale(0.325)"><circle cx="16" cy="16" r="16" fill="url(#gGlobe)"/><path d="M2.5 10 C5 5 9 2.5 14 2.5 C15 5 12 8 13 10 C10 12 9 15 6 15 C4 16 2.5 17 1 17 C1 14 1.5 12 2.5 10 Z" fill="#2cb03c"/><path d="M9 22 C13 19 19 19 23 22 C23 27 19 30.5 14 30.5 C11 28 9 25 9 22 Z" fill="#24a034"/><path d="M22 4 C26 5 30 9 31 14 C31 18 29 19 27 18 C26 14 24 12 24 9 Z" fill="#3cb848"/><ellipse cx="14" cy="9" rx="5" ry="3.5" fill="#c8ffff" opacity="0.35"/></g></svg>
<svg class="r" style="left:14px;top:43px" width="7" height="6" viewBox="0 0 7 6"><path d="M1 5 L3.5 0.5 L6 5 Z" fill="#f0c020"/></svg>
<svg class="r" style="left:17px;top:63px" width="16" height="16" viewBox="0 0 16 16"><rect x="7.5" y="1" width="7" height="15" fill="#c4cad0" stroke="#7a8088" stroke-width="0.8"/><path d="M8.5 3.5 H13.5 M8.5 5.5 H13.5 M8.5 7.5 H13.5 M8.5 9.5 H13.5" stroke="#6a7480" stroke-width="0.7"/><rect x="9" y="12.5" width="3" height="2" fill="#60c040"/><g transform="translate(0.2999999999999998,0.2999999999999998) scale(0.325)"><circle cx="16" cy="16" r="16" fill="url(#gGlobe)"/><path d="M2.5 10 C5 5 9 2.5 14 2.5 C15 5 12 8 13 10 C10 12 9 15 6 15 C4 16 2.5 17 1 17 C1 14 1.5 12 2.5 10 Z" fill="#2cb03c"/><path d="M9 22 C13 19 19 19 23 22 C23 27 19 30.5 14 30.5 C11 28 9 25 9 22 Z" fill="#24a034"/><path d="M22 4 C26 5 30 9 31 14 C31 18 29 19 27 18 C26 14 24 12 24 9 Z" fill="#3cb848"/><ellipse cx="14" cy="9" rx="5" ry="3.5" fill="#c8ffff" opacity="0.35"/></g></svg>
<svg class="r" style="left:35px;top:81px" width="16" height="16" viewBox="0 0 16 16"><rect x="2" y="3" width="9" height="10" fill="#f4f4f4" stroke="#a0a0a0" stroke-width="0.8"/><path d="M4 6 H9 M4 8 H9 M4 10 H9" stroke="#5080c0" stroke-width="0.8"/><g transform="translate(6.5,0.5) scale(0.28125)"><circle cx="16" cy="16" r="16" fill="url(#gGlobe)"/><path d="M2.5 10 C5 5 9 2.5 14 2.5 C15 5 12 8 13 10 C10 12 9 15 6 15 C4 16 2.5 17 1 17 C1 14 1.5 12 2.5 10 Z" fill="#2cb03c"/><path d="M9 22 C13 19 19 19 23 22 C23 27 19 30.5 14 30.5 C11 28 9 25 9 22 Z" fill="#24a034"/><path d="M22 4 C26 5 30 9 31 14 C31 18 29 19 27 18 C26 14 24 12 24 9 Z" fill="#3cb848"/><ellipse cx="14" cy="9" rx="5" ry="3.5" fill="#c8ffff" opacity="0.35"/></g><path d="M0.5 12 C2 16 13 16 15.5 12 L13 14 L3 14 Z" fill="#d03030"/></svg>
<svg class="r" style="left:36px;top:100px" width="15" height="13" viewBox="0 0 15 13"><path d="M0.5 2.5 H5 L6.5 0.5 H14.5 V12.5 H0.5 Z" fill="url(#gFolder)" stroke="#c8a040" stroke-width="0.8"/><g transform="translate(4.0,4.5) scale(0.21875)"><circle cx="16" cy="16" r="16" fill="url(#gGlobe)"/><path d="M2.5 10 C5 5 9 2.5 14 2.5 C15 5 12 8 13 10 C10 12 9 15 6 15 C4 16 2.5 17 1 17 C1 14 1.5 12 2.5 10 Z" fill="#2cb03c"/><path d="M9 22 C13 19 19 19 23 22 C23 27 19 30.5 14 30.5 C11 28 9 25 9 22 Z" fill="#24a034"/><path d="M22 4 C26 5 30 9 31 14 C31 18 29 19 27 18 C26 14 24 12 24 9 Z" fill="#3cb848"/><ellipse cx="14" cy="9" rx="5" ry="3.5" fill="#c8ffff" opacity="0.35"/></g></svg>
<svg class="r" style="left:54px;top:117.5px" width="16" height="16" viewBox="0 0 32 32"><g transform="translate(1,1) scale(0.875)"><circle cx="16" cy="16" r="16" fill="url(#gGlobe)"/><path d="M2.5 10 C5 5 9 2.5 14 2.5 C15 5 12 8 13 10 C10 12 9 15 6 15 C4 16 2.5 17 1 17 C1 14 1.5 12 2.5 10 Z" fill="#2cb03c"/><path d="M9 22 C13 19 19 19 23 22 C23 27 19 30.5 14 30.5 C11 28 9 25 9 22 Z" fill="#24a034"/><path d="M22 4 C26 5 30 9 31 14 C31 18 29 19 27 18 C26 14 24 12 24 9 Z" fill="#3cb848"/><ellipse cx="14" cy="9" rx="5" ry="3.5" fill="#c8ffff" opacity="0.35"/></g><circle cx="23" cy="23" r="8" fill="#2040a0" stroke="#fff" stroke-width="1.5"/><text x="23" y="27.5" font-size="12" font-family="Liberation Sans" font-weight="bold" text-anchor="middle" fill="#fff">?</text></svg>
<svg class="r" style="left:54px;top:135.5px" width="16" height="16" viewBox="0 0 32 32"><g transform="translate(1,1) scale(0.875)"><circle cx="16" cy="16" r="16" fill="url(#gGlobe)"/><path d="M2.5 10 C5 5 9 2.5 14 2.5 C15 5 12 8 13 10 C10 12 9 15 6 15 C4 16 2.5 17 1 17 C1 14 1.5 12 2.5 10 Z" fill="#2cb03c"/><path d="M9 22 C13 19 19 19 23 22 C23 27 19 30.5 14 30.5 C11 28 9 25 9 22 Z" fill="#24a034"/><path d="M22 4 C26 5 30 9 31 14 C31 18 29 19 27 18 C26 14 24 12 24 9 Z" fill="#3cb848"/><ellipse cx="14" cy="9" rx="5" ry="3.5" fill="#c8ffff" opacity="0.35"/></g><circle cx="23" cy="23" r="8" fill="#2040a0" stroke="#fff" stroke-width="1.5"/><text x="23" y="27.5" font-size="12" font-family="Liberation Sans" font-weight="bold" text-anchor="middle" fill="#fff">?</text></svg>
<svg class="r" style="left:54px;top:153.5px" width="16" height="16" viewBox="0 0 32 32"><g transform="translate(1,1) scale(0.9375)"><circle cx="16" cy="16" r="16" fill="url(#gGlobe)"/><path d="M2.5 10 C5 5 9 2.5 14 2.5 C15 5 12 8 13 10 C10 12 9 15 6 15 C4 16 2.5 17 1 17 C1 14 1.5 12 2.5 10 Z" fill="#2cb03c"/><path d="M9 22 C13 19 19 19 23 22 C23 27 19 30.5 14 30.5 C11 28 9 25 9 22 Z" fill="#24a034"/><path d="M22 4 C26 5 30 9 31 14 C31 18 29 19 27 18 C26 14 24 12 24 9 Z" fill="#3cb848"/><ellipse cx="14" cy="9" rx="5" ry="3.5" fill="#c8ffff" opacity="0.35"/></g></svg>
<svg class="r" style="left:1px;top:68px" width="9" height="6" viewBox="0 0 9 6"><path d="M0.8 0.8 L4.5 4.8 L8.2 0.8" stroke="#404040" stroke-width="1.4" fill="none"/></svg>
<svg class="r" style="left:20px;top:104px" width="9" height="6" viewBox="0 0 9 6"><path d="M0.8 0.8 L4.5 4.8 L8.2 0.8" stroke="#404040" stroke-width="1.4" fill="none"/></svg>
<svg class="r" style="left:40px;top:121px" width="6" height="9" viewBox="0 0 6 9"><path d="M0.8 0.8 L4.8 4.5 L0.8 8.2" stroke="#a8a8a8" stroke-width="1.3" fill="none"/></svg>
<svg class="r" style="left:40px;top:139px" width="6" height="9" viewBox="0 0 6 9"><path d="M0.8 0.8 L4.8 4.5 L0.8 8.2" stroke="#a8a8a8" stroke-width="1.3" fill="none"/></svg>
<svg class="r" style="left:40px;top:157px" width="6" height="9" viewBox="0 0 6 9"><path d="M0.8 0.8 L4.8 4.5 L0.8 8.2" stroke="#a8a8a8" stroke-width="1.3" fill="none"/></svg>
<div class="r" style="left:5px;top:55px;width:11px;height:1px;border-top:1px dotted #a0a0a0;"></div>
<div class="r" style="left:5px;top:55px;width:1px;height:8px;border-left:1px dotted #a0a0a0;"></div>
<div class="r" style="left:13px;top:73px;width:4px;height:1px;border-top:1px dotted #a0a0a0;"></div>
<div class="r" style="left:25px;top:79px;width:1px;height:20px;border-left:1px dotted #a0a0a0;"></div>
<div class="r" style="left:25px;top:90px;width:10px;height:1px;border-top:1px dotted #a0a0a0;"></div>
<div class="r" style="left:32px;top:107px;width:4px;height:1px;border-top:1px dotted #a0a0a0;"></div>
<div class="r" style="left:44px;top:113px;width:1px;height:4px;border-left:1px dotted #a0a0a0;"></div>
<div class="r" style="left:50px;top:125px;width:4px;height:1px;border-top:1px dotted #a0a0a0;"></div>
<div class="r" style="left:50px;top:143px;width:4px;height:1px;border-top:1px dotted #a0a0a0;"></div>
<div class="r" style="left:50px;top:161px;width:4px;height:1px;border-top:1px dotted #a0a0a0;"></div>
<svg class="r" style="left:1416px;top:25px" width="13" height="16" viewBox="0 0 13 16"><path d="M0.5 0.5 H9 L12.5 4 V15.5 H0.5 Z" fill="url(#gFolder)" stroke="#c8a040" stroke-width="0.8"/><circle cx="5" cy="9" r="3" fill="none" stroke="#607080" stroke-width="1.3"/><path d="M3 11 L0.5 14" stroke="#607080" stroke-width="1.5"/></svg>
<svg class="r" style="left:1415px;top:110px" width="16" height="16" viewBox="0 0 16 16"><rect x="0.5" y="0.5" width="15" height="15" rx="1.5" fill="#e8eaec" stroke="#a0a4a8"/><rect x="3" y="3" width="10" height="9" fill="#fff" stroke="#c0c4c8" stroke-width="0.6"/><path d="M6 14 H10" stroke="#40a0e0" stroke-width="1.5"/></svg>
<svg class="r" style="left:1416px;top:206px" width="14" height="15" viewBox="0 0 14 15"><path d="M2 6 C3 2 9 1 11 4 L12.5 2 V7 H8 L10 5.5 C8 3.5 5 4 4 6.5 Z" fill="#40b040"/><path d="M12 9 C11 13 5 14 3 11 L1.5 13 V8 H6 L4 9.5 C6 11.5 9 11 10 8.5 Z" fill="#40b040"/></svg>
<svg class="r" style="left:1417px;top:227px" width="9" height="11" viewBox="0 0 9 11"><path d="M0.5 0.5 L8.5 5.5 L0.5 10.5 Z" fill="#b8b8b8"/></svg>
<div class="r" style="left:1417px;top:247px;width:11px;height:10px;background:#303030;border-radius:1px;"></div>
<svg class="r" style="left:1415px;top:291px" width="16" height="15" viewBox="0 0 16 15"><rect x="0.5" y="0.5" width="15" height="14" fill="#f0f2f4" stroke="#8a9098"/><rect x="1" y="1" width="14" height="2" fill="#a8b0b8"/><g transform="translate(4,5) scale(0.25)"><circle cx="16" cy="16" r="16" fill="url(#gGlobe)"/><path d="M2.5 10 C5 5 9 2.5 14 2.5 C15 5 12 8 13 10 C10 12 9 15 6 15 C4 16 2.5 17 1 17 C1 14 1.5 12 2.5 10 Z" fill="#2cb03c"/><path d="M9 22 C13 19 19 19 23 22 C23 27 19 30.5 14 30.5 C11 28 9 25 9 22 Z" fill="#24a034"/><path d="M22 4 C26 5 30 9 31 14 C31 18 29 19 27 18 C26 14 24 12 24 9 Z" fill="#3cb848"/><ellipse cx="14" cy="9" rx="5" ry="3.5" fill="#c8ffff" opacity="0.35"/></g></svg>
<svg class="r" style="left:1415px;top:311px" width="16" height="15" viewBox="0 0 16 15"><rect x="0.5" y="0.5" width="15" height="14" fill="#f0f2f4" stroke="#8a9098"/><rect x="1" y="1" width="14" height="2" fill="#a8b0b8"/><g transform="translate(4,5) scale(0.25)"><circle cx="16" cy="16" r="16" fill="url(#gGlobe)"/><path d="M2.5 10 C5 5 9 2.5 14 2.5 C15 5 12 8 13 10 C10 12 9 15 6 15 C4 16 2.5 17 1 17 C1 14 1.5 12 2.5 10 Z" fill="#2cb03c"/><path d="M9 22 C13 19 19 19 23 22 C23 27 19 30.5 14 30.5 C11 28 9 25 9 22 Z" fill="#24a034"/><path d="M22 4 C26 5 30 9 31 14 C31 18 29 19 27 18 C26 14 24 12 24 9 Z" fill="#3cb848"/><ellipse cx="14" cy="9" rx="5" ry="3.5" fill="#c8ffff" opacity="0.35"/></g></svg>
<svg class="r" style="left:1415px;top:331px" width="16" height="15" viewBox="0 0 16 15"><rect x="0.5" y="0.5" width="15" height="14" fill="#f0f2f4" stroke="#8a9098"/><rect x="1" y="1" width="14" height="2" fill="#a8b0b8"/><g transform="translate(4,5) scale(0.25)"><circle cx="16" cy="16" r="16" fill="url(#gGlobe)"/><path d="M2.5 10 C5 5 9 2.5 14 2.5 C15 5 12 8 13 10 C10 12 9 15 6 15 C4 16 2.5 17 1 17 C1 14 1.5 12 2.5 10 Z" fill="#2cb03c"/><path d="M9 22 C13 19 19 19 23 22 C23 27 19 30.5 14 30.5 C11 28 9 25 9 22 Z" fill="#24a034"/><path d="M22 4 C26 5 30 9 31 14 C31 18 29 19 27 18 C26 14 24 12 24 9 Z" fill="#3cb848"/><ellipse cx="14" cy="9" rx="5" ry="3.5" fill="#c8ffff" opacity="0.35"/></g></svg>
<svg class="r" style="left:1415px;top:351px" width="16" height="15" viewBox="0 0 16 15"><rect x="0.5" y="0.5" width="15" height="14" fill="#f0f2f4" stroke="#8a9098"/><rect x="1" y="1" width="14" height="2" fill="#a8b0b8"/><g transform="translate(4,5) scale(0.25)"><circle cx="16" cy="16" r="16" fill="url(#gGlobe)"/><path d="M2.5 10 C5 5 9 2.5 14 2.5 C15 5 12 8 13 10 C10 12 9 15 6 15 C4 16 2.5 17 1 17 C1 14 1.5 12 2.5 10 Z" fill="#2cb03c"/><path d="M9 22 C13 19 19 19 23 22 C23 27 19 30.5 14 30.5 C11 28 9 25 9 22 Z" fill="#24a034"/><path d="M22 4 C26 5 30 9 31 14 C31 18 29 19 27 18 C26 14 24 12 24 9 Z" fill="#3cb848"/><ellipse cx="14" cy="9" rx="5" ry="3.5" fill="#c8ffff" opacity="0.35"/></g></svg>
<svg class="r" style="left:1414px;top:488px" width="17" height="17" viewBox="0 0 32 32"><rect x="3" y="10" width="14" height="18" fill="#f0f0f0" stroke="#a0a0a0"/><g transform="translate(8,1) scale(0.6875)"><circle cx="16" cy="16" r="16" fill="url(#gGlobe)"/><path d="M2.5 10 C5 5 9 2.5 14 2.5 C15 5 12 8 13 10 C10 12 9 15 6 15 C4 16 2.5 17 1 17 C1 14 1.5 12 2.5 10 Z" fill="#2cb03c"/><path d="M9 22 C13 19 19 19 23 22 C23 27 19 30.5 14 30.5 C11 28 9 25 9 22 Z" fill="#24a034"/><path d="M22 4 C26 5 30 9 31 14 C31 18 29 19 27 18 C26 14 24 12 24 9 Z" fill="#3cb848"/><ellipse cx="14" cy="9" rx="5" ry="3.5" fill="#c8ffff" opacity="0.35"/></g><circle cx="24" cy="8" r="4" fill="#f8c040"/></svg>
<svg class="r" style="left:1415px;top:519px" width="16" height="16" viewBox="0 0 16 16"><circle cx="8" cy="8" r="7.5" fill="#3050b0"/><circle cx="8" cy="8" r="6" fill="#4070d0"/><text x="8" y="12" font-size="11" font-family="Liberation Sans" font-weight="bold" text-anchor="middle" fill="#fff">?</text></svg>
<svg class="r" style="left:482px;top:54px" width="13" height="14" viewBox="0 0 13 14"><path d="M0.5 0.5 H12.5 L8 6 V13 L5 11 V6 Z" fill="#d0d0d0" stroke="#b8b8b8" stroke-width="0.8"/></svg>
<svg class="r" style="left:467px;top:59px" width="8" height="4" viewBox="0 0 8 4"><path d="M0 0 H8 L4 4 Z" fill="#111"/></svg>
<svg class="r" style="left:776px;top:59px" width="8" height="4" viewBox="0 0 8 4"><path d="M0 0 H8 L4 4 Z" fill="#111"/></svg>
<svg class="r" style="left:524px;top:60px" width="6" height="3" viewBox="0 0 6 3"><path d="M0 0 H6 L3 3 Z" fill="#a0a0a0"/></svg>
<svg class="r" style="left:534px;top:54px" width="17" height="15" viewBox="0 0 17 15"><rect x="0.5" y="0.5" width="12" height="10" fill="#f4f6f8" stroke="#7a8898"/><rect x="5" y="5" width="11.5" height="9.5" fill="#e8eef4" stroke="#7a8898"/><path d="M2 8 C4 11 7 12 10 11 L8 9" stroke="#2a80d0" stroke-width="1.8" fill="none"/></svg>
<svg class="r" style="left:789px;top:54px" width="16" height="15" viewBox="0 0 16 15"><rect x="0.5" y="0.5" width="15" height="14" fill="#e4e6ea" stroke="#9aa0a8"/><rect x="3" y="4" width="4" height="4" fill="#b8c8a0"/><rect x="9" y="4" width="4" height="4" fill="#a8b8d0"/><rect x="3" y="9" width="4" height="4" fill="#a8b8d0"/><rect x="9" y="9" width="4" height="4" fill="#d0b8b8"/></svg>
<svg class="r" style="left:806px;top:59px" width="6" height="4" viewBox="0 0 6 4"><path d="M0 0 H6 L3 4 Z" fill="#111"/></svg>
<div class="r" style="left:1411px;top:176px;width:195px;height:26px;background:linear-gradient(#eaeaea,#f7f7f7);"></div>
<div class="t" style="left:1417.5px;top:185.2px;font-size:11.6px;color:#141414;font-weight:bold;">Manage Website</div>
<div class="r" style="left:1580px;top:183px;width:15px;height:15px;border-radius:50%;border:1px solid #b8b8b8;background:linear-gradient(#fff,#e0e0e0);"></div>
<svg class="r" style="left:1583px;top:186px;" width="10" height="8" viewBox="0 0 10 8"><path d="M1.5 6 L5 2.5 L8.5 6" stroke="#303030" stroke-width="1.6" fill="none"/></svg>
<div class="t" style="left:1439.5px;top:208.8px;font-size:11.6px;color:#5b9fe0;font-weight:normal;">Restart</div>
<div class="t" style="left:1439.5px;top:228.3px;font-size:11.6px;color:#a8a8a8;font-weight:normal;">Start</div>
<div class="t" style="left:1439.5px;top:247.8px;font-size:11.6px;color:#5b9fe0;font-weight:normal;">Stop</div>
<div class="t" style="left:1439.5px;top:272.8px;font-size:11.6px;color:#141414;font-weight:bold;">Browse Website</div>
<div class="t" style="left:1439.5px;top:293.1px;font-size:11.6px;color:#5b9fe0;font-weight:normal;">Browse *:80 (http)</div>
<div class="t" style="left:1439.5px;top:313.1px;font-size:11.6px;color:#5b9fe0;font-weight:normal;">Browse 127.0.0.1:80 (http)</div>
<div class="t" style="left:1439.5px;top:332.6px;font-size:11.6px;color:#5b9fe0;font-weight:normal;">Browse 127.0.0.1:443 (https)</div>
<div class="t" style="left:1439.5px;top:352.0px;font-size:11.6px;color:#5b9fe0;font-weight:normal;">Browse *:443 (https)</div>
<div class="t" style="left:1439.5px;top:377.0px;font-size:11.6px;color:#5b9fe0;font-weight:normal;">Advanced Settings...</div>
<div class="t" style="left:1439.5px;top:402.4px;font-size:11.6px;color:#141414;font-weight:bold;">Configure</div>
<div class="t" style="left:1439.5px;top:421.9px;font-size:11.6px;color:#5b9fe0;font-weight:normal;">Failed Request Tracing...</div>
<div class="t" style="left:1439.5px;top:441.4px;font-size:11.6px;color:#5b9fe0;font-weight:normal;">Limits...</div>
<div class="t" style="left:1439.5px;top:460.8px;font-size:11.6px;color:#5b9fe0;font-weight:normal;">HSTS...</div>
<div class="t" style="left:1439.5px;top:484.5px;font-size:11.6px;color:#5b9fe0;font-weight:normal;">Install Application From</div>
<div class="t" style="left:1439.5px;top:499.0px;font-size:11.6px;color:#5b9fe0;font-weight:normal;">Gallery</div>
<div class="t" style="left:1439.5px;top:522.0px;font-size:11.6px;color:#5b9fe0;font-weight:normal;">Help</div>
<div class="r" style="left:1414px;top:265px;width:192px;height:2px;background:linear-gradient(90deg,rgba(170,170,170,0),#bababa 17px);height:1px;"></div>
<div class="r" style="left:1414px;top:369.5px;width:192px;height:2px;background:linear-gradient(90deg,rgba(170,170,170,0),#bababa 17px);height:1px;"></div>
<div class="r" style="left:1414px;top:394px;width:192px;height:2px;background:linear-gradient(90deg,rgba(170,170,170,0),#bababa 17px);height:1px;"></div>
<div class="r" style="left:1414px;top:479px;width:192px;height:2px;background:linear-gradient(90deg,rgba(170,170,170,0),#bababa 17px);height:1px;"></div>
<div class="r" style="left:1414px;top:514px;width:192px;height:2px;background:linear-gradient(90deg,rgba(170,170,170,0),#bababa 17px);height:1px;"></div>
<div class="r" style="left:475px;top:169px;width:645px;height:376px;background:#f6f1f4;border:1px solid #bdbdbd;border-bottom:none;"></div>
<div class="r" style="left:476px;top:170px;width:643px;height:29px;background:#fff;"></div>
<div class="t" style="left:484.3px;top:178.2px;font-size:12px;color:#9a9a9a;font-weight:normal;">Site Bindings</div>
<div class="t" style="left:1048.0px;top:178.2px;font-size:12px;color:#8c8c8c;font-weight:normal;">?</div>
<svg class="r" style="left:1088px;top:178px;" width="13" height="13" viewBox="0 0 13 13"><path d="M1 1 L12 12 M12 1 L1 12" stroke="#8c8c8c" stroke-width="1.1"/></svg>
<div class="r" style="left:490px;top:213px;width:497px;height:278px;background:#fff;border:1px solid #84868e;"></div>
<div class="r" style="left:541px;top:215px;width:1px;height:28px;background:#ececec;"></div>
<div class="r" style="left:652px;top:215px;width:1px;height:28px;background:#ececec;"></div>
<div class="r" style="left:702px;top:215px;width:1px;height:28px;background:#ececec;"></div>
<div class="r" style="left:802px;top:215px;width:1px;height:28px;background:#ececec;"></div>
<div class="r" style="left:910px;top:215px;width:1px;height:28px;background:#ececec;"></div>
<div class="t" style="left:499.0px;top:221.5px;font-size:11.8px;color:#2a2a2a;font-weight:normal;">Type</div>
<div class="t" style="left:548.4px;top:221.5px;font-size:11.8px;color:#2a2a2a;font-weight:normal;">Host Name</div>
<div class="t" style="left:658.3px;top:221.5px;font-size:11.8px;color:#2a2a2a;font-weight:normal;">Port</div>
<div class="t" style="left:708.0px;top:221.5px;font-size:11.8px;color:#2a2a2a;font-weight:normal;">IP Address</div>
<div class="t" style="left:808.2px;top:221.5px;font-size:11.8px;color:#2a2a2a;font-weight:normal;">Binding Informa...</div>
<div class="r" style="left:492px;top:372px;width:418px;height:19px;background:#f1edf0;"></div>
<div class="t" style="left:499.0px;top:243.3px;font-size:11.8px;color:#2a2a2a;font-weight:normal;">http</div>
<div class="t" style="left:658.3px;top:243.3px;font-size:11.8px;color:#2a2a2a;font-weight:normal;">80</div>
<div class="t" style="left:708.0px;top:243.3px;font-size:11.8px;color:#2a2a2a;font-weight:normal;">*</div>
<div class="t" style="left:499.0px;top:262.3px;font-size:11.8px;color:#2a2a2a;font-weight:normal;">net.tcp</div>
<div class="t" style="left:808.2px;top:262.3px;font-size:11.8px;color:#2a2a2a;font-weight:normal;">808:*</div>
<div class="t" style="left:499.0px;top:281.3px;font-size:11.8px;color:#2a2a2a;font-weight:normal;">net.m...</div>
<div class="t" style="left:808.2px;top:281.3px;font-size:11.8px;color:#2a2a2a;font-weight:normal;">localhost</div>
<div class="t" style="left:499.0px;top:300.3px;font-size:11.8px;color:#2a2a2a;font-weight:normal;">msm...</div>
<div class="t" style="left:808.2px;top:300.3px;font-size:11.8px;color:#2a2a2a;font-weight:normal;">localhost</div>
<div class="t" style="left:499.0px;top:319.3px;font-size:11.8px;color:#2a2a2a;font-weight:normal;">net.pi...</div>
<div class="t" style="left:808.2px;top:319.3px;font-size:11.8px;color:#2a2a2a;font-weight:normal;">*</div>
<div class="t" style="left:499.0px;top:338.3px;font-size:11.8px;color:#2a2a2a;font-weight:normal;">http</div>
<div class="t" style="left:658.3px;top:338.3px;font-size:11.8px;color:#2a2a2a;font-weight:normal;">80</div>
<div class="t" style="left:708.0px;top:338.3px;font-size:11.8px;color:#2a2a2a;font-weight:normal;">127.0.0.1</div>
<div class="t" style="left:499.0px;top:357.3px;font-size:11.8px;color:#2a2a2a;font-weight:normal;">https</div>
<div class="t" style="left:658.3px;top:357.3px;font-size:11.8px;color:#2a2a2a;font-weight:normal;">443</div>
<div class="t" style="left:708.0px;top:357.3px;font-size:11.8px;color:#2a2a2a;font-weight:normal;">127.0.0.1</div>
<div class="t" style="left:499.0px;top:376.3px;font-size:11.8px;color:#2a2a2a;font-weight:normal;">https</div>
<div class="t" style="left:658.3px;top:376.3px;font-size:11.8px;color:#2a2a2a;font-weight:normal;">443</div>
<div class="t" style="left:708.0px;top:376.3px;font-size:11.8px;color:#2a2a2a;font-weight:normal;">*</div>
<div class="r" style="left:1000px;top:214px;width:104px;height:25px;background:#e1e1e1;border:1px solid #adadad;"></div>
<div class="t" style="left:852.0px;width:400px;text-align:center;top:221.8px;font-size:11.8px;color:#2a2a2a;font-weight:normal;">Add...</div>
<div class="r" style="left:1000px;top:247px;width:104px;height:26px;background:#e1e1e1;border:2px solid #0a78d4;"></div>
<div class="t" style="left:852.0px;width:400px;text-align:center;top:255.3px;font-size:11.8px;color:#2a2a2a;font-weight:normal;">Edit...</div>
<div class="r" style="left:1000px;top:281px;width:104px;height:25px;background:#e1e1e1;border:1px solid #adadad;"></div>
<div class="t" style="left:852.0px;width:400px;text-align:center;top:288.8px;font-size:11.8px;color:#2a2a2a;font-weight:normal;">Remove</div>
<div class="r" style="left:1000px;top:314px;width:104px;height:25px;background:#e1e1e1;border:1px solid #adadad;"></div>
<div class="t" style="left:852.0px;width:400px;text-align:center;top:321.8px;font-size:11.8px;color:#2a2a2a;font-weight:normal;">Browse</div>
<div class="r" style="left:998px;top:506px;width:106px;height:25px;background:#e1e1e1;border:1px solid #adadad;"></div>
<div class="t" style="left:851.0px;width:400px;text-align:center;top:513.8px;font-size:11.8px;color:#2a2a2a;font-weight:normal;">Close</div>
<div class="r" style="left:518px;top:405px;width:526px;height:419px;background:#f6f1f4;border:1px solid #9c9c9c;"></div>
<div class="r" style="left:519px;top:406px;width:524px;height:30px;background:#fff;"></div>
<div class="t" style="left:527.2px;top:415.5px;font-size:12px;color:#2a2a2a;font-weight:normal;">Edit Site Binding</div>
<div class="t" style="left:971.0px;top:415.5px;font-size:12px;color:#2a2a2a;font-weight:normal;">?</div>
<svg class="r" style="left:1013px;top:415px;" width="13" height="13" viewBox="0 0 13 13"><path d="M1 1 L12 12 M12 1 L1 12" stroke="#2a2a2a" stroke-width="1.1"/></svg>
<div class="t" style="left:536.0px;top:453.2px;font-size:11.6px;color:#2a2a2a;font-weight:normal;">Type:</div>
<div class="t" style="left:656.8px;top:453.2px;font-size:11.6px;color:#2a2a2a;font-weight:normal;">IP address:</div>
<div class="t" style="left:876.9px;top:453.2px;font-size:11.6px;color:#2a2a2a;font-weight:normal;">Port:</div>
<div class="r" style="left:533px;top:469px;width:116px;height:22px;background:#cccccc;border:1px solid #cccccc;"></div>
<div class="t" style="left:537.0px;top:473.7px;font-size:11.6px;color:#9c9c9c;font-weight:normal;">https</div>
<svg class="r" style="left:634px;top:476px;" width="10" height="7" viewBox="0 0 10 7"><path d="M1 1.5 L5 5.5 L9 1.5" stroke="#a8a8a8" stroke-width="1.1" fill="none"/></svg>
<div class="r" style="left:657px;top:468px;width:213px;height:23px;background:#fff;border:1px solid #7a7a7a;"></div>
<div class="t" style="left:660.5px;top:473.7px;font-size:11.6px;color:#2a2a2a;font-weight:normal;">All Unassigned</div>
<svg class="r" style="left:855px;top:476px;" width="10" height="7" viewBox="0 0 10 7"><path d="M1 1.5 L5 5.5 L9 1.5" stroke="#3c3c3c" stroke-width="1.1" fill="none"/></svg>
<div class="r" style="left:876px;top:468px;width:59px;height:23px;background:#fff;border:1px solid #7a7a7a;"></div>
<div class="t" style="left:879.0px;top:473.7px;font-size:11.6px;color:#2a2a2a;font-weight:normal;">443</div>
<div class="t" style="left:536.0px;top:504.7px;font-size:11.6px;color:#2a2a2a;font-weight:normal;">Host name:</div>
<div class="r" style="left:533px;top:521px;width:302px;height:22px;background:#fff;border:1px solid #7a7a7a;"></div>
<div class="r" style="left:533px;top:552px;width:13px;height:13px;background:#fff;border:1px solid #333;"></div>
<div class="t" style="left:552.0px;top:553.2px;font-size:11.6px;color:#2a2a2a;font-weight:normal;">Require Server Name Indication</div>
<div class="r" style="left:533px;top:603px;width:13px;height:13px;background:#fff;border:1px solid #333;"></div>
<div class="t" style="left:552.0px;top:604.9px;font-size:11.6px;color:#2a2a2a;font-weight:normal;">Disable HTTP/2</div>
<div class="r" style="left:533px;top:630px;width:13px;height:13px;background:#fff;border:1px solid #333;"></div>
<div class="t" style="left:552.0px;top:630.7px;font-size:11.6px;color:#2a2a2a;font-weight:normal;">Disable OCSP Stapling</div>
<div class="t" style="left:536.0px;top:712.8px;font-size:11.6px;color:#2a2a2a;font-weight:normal;">SSL certificate:</div>
<div class="r" style="left:533px;top:729px;width:297px;height:22px;background:#e5e5e5;border:1px solid #adadad;"></div>
<div class="t" style="left:537.0px;top:733.7px;font-size:11.6px;color:#2a2a2a;font-weight:normal;">Kanban 2023</div>
<svg class="r" style="left:814px;top:736px;" width="10" height="7" viewBox="0 0 10 7"><path d="M1 1.5 L5 5.5 L9 1.5" stroke="#3c3c3c" stroke-width="1.1" fill="none"/></svg>
<div class="r" style="left:837px;top:729px;width:87px;height:25px;background:#e1e1e1;border:1px solid #adadad;"></div>
<div class="t" style="left:680.5px;width:400px;text-align:center;top:736.8px;font-size:11.8px;color:#2a2a2a;font-weight:normal;">Select...</div>
<div class="r" style="left:933px;top:729px;width:87px;height:25px;background:#e1e1e1;border:1px solid #adadad;"></div>
<div class="t" style="left:776.5px;width:400px;text-align:center;top:736.8px;font-size:11.8px;color:#2a2a2a;font-weight:normal;">View...</div>
<div class="r" style="left:830px;top:785px;width:92px;height:25px;background:#cccccc;border:1px solid #c4c4c4;"></div>
<div class="t" style="left:676.0px;width:400px;text-align:center;top:792.8px;font-size:11.8px;color:#a2a2a2;font-weight:normal;">OK</div>
<div class="r" style="left:932px;top:785px;width:97px;height:25px;background:#e1e1e1;border:2px solid #0a78d4;"></div>
<div class="t" style="left:780.5px;width:400px;text-align:center;top:792.8px;font-size:11.8px;color:#2a2a2a;font-weight:normal;">Cancel</div>
<svg width="0" height="0" style="position:absolute"><defs><filter id="ashadow" x="-50%" y="-50%" width="200%" height="200%"><feGaussianBlur stdDeviation="7"/></filter></defs></svg>
<svg class="r" style="left:136px;top:45px;overflow:visible" width="143" height="114"><g filter="url(#ashadow)" opacity="0.34" transform="translate(3,8)"><path d="M103.1 40.0 L49.7 68.5" stroke="#404858" stroke-width="6.2"/><path d="M40.0 73.7 L47.3 61.9 L53.9 74.2 Z" fill="#404858"/></g><path d="M103.1 40.0 L49.7 68.5" stroke="#323a52" stroke-width="3.2"/><path d="M40.0 73.7 L47.3 61.9 L53.9 74.2 Z" fill="#323a52"/></svg>
<svg class="r" style="left:1461px;top:45px;overflow:visible" width="121" height="96"><g filter="url(#ashadow)" opacity="0.34" transform="translate(3,8)"><path d="M81.3 40.0 L50.2 52.3" stroke="#404858" stroke-width="6.2"/><path d="M40.0 56.3 L48.6 45.4 L53.7 58.4 Z" fill="#404858"/></g><path d="M81.3 40.0 L50.2 52.3" stroke="#323a52" stroke-width="3.2"/><path d="M40.0 56.3 L48.6 45.4 L53.7 58.4 Z" fill="#323a52"/></svg>
<svg class="r" style="left:515px;top:300px;overflow:visible" width="146" height="120"><g filter="url(#ashadow)" opacity="0.34" transform="translate(3,8)"><path d="M105.5 40.0 L49.4 74.4" stroke="#404858" stroke-width="6.2"/><path d="M40.0 80.1 L46.6 67.9 L53.9 79.8 Z" fill="#404858"/></g><path d="M105.5 40.0 L49.4 74.4" stroke="#323a52" stroke-width="3.2"/><path d="M40.0 80.1 L46.6 67.9 L53.9 79.8 Z" fill="#323a52"/></svg>
<svg class="r" style="left:803px;top:629px;overflow:visible" width="106" height="118"><g filter="url(#ashadow)" opacity="0.34" transform="translate(3,8)"><path d="M40.0 40.0 L59.4 69.2" stroke="#404858" stroke-width="6.2"/><path d="M65.5 78.4 L53.0 72.3 L64.7 64.5 Z" fill="#404858"/></g><path d="M40.0 40.0 L59.4 69.2" stroke="#323a52" stroke-width="3.2"/><path d="M65.5 78.4 L53.0 72.3 L64.7 64.5 Z" fill="#323a52"/></svg>
</div></body></html>
